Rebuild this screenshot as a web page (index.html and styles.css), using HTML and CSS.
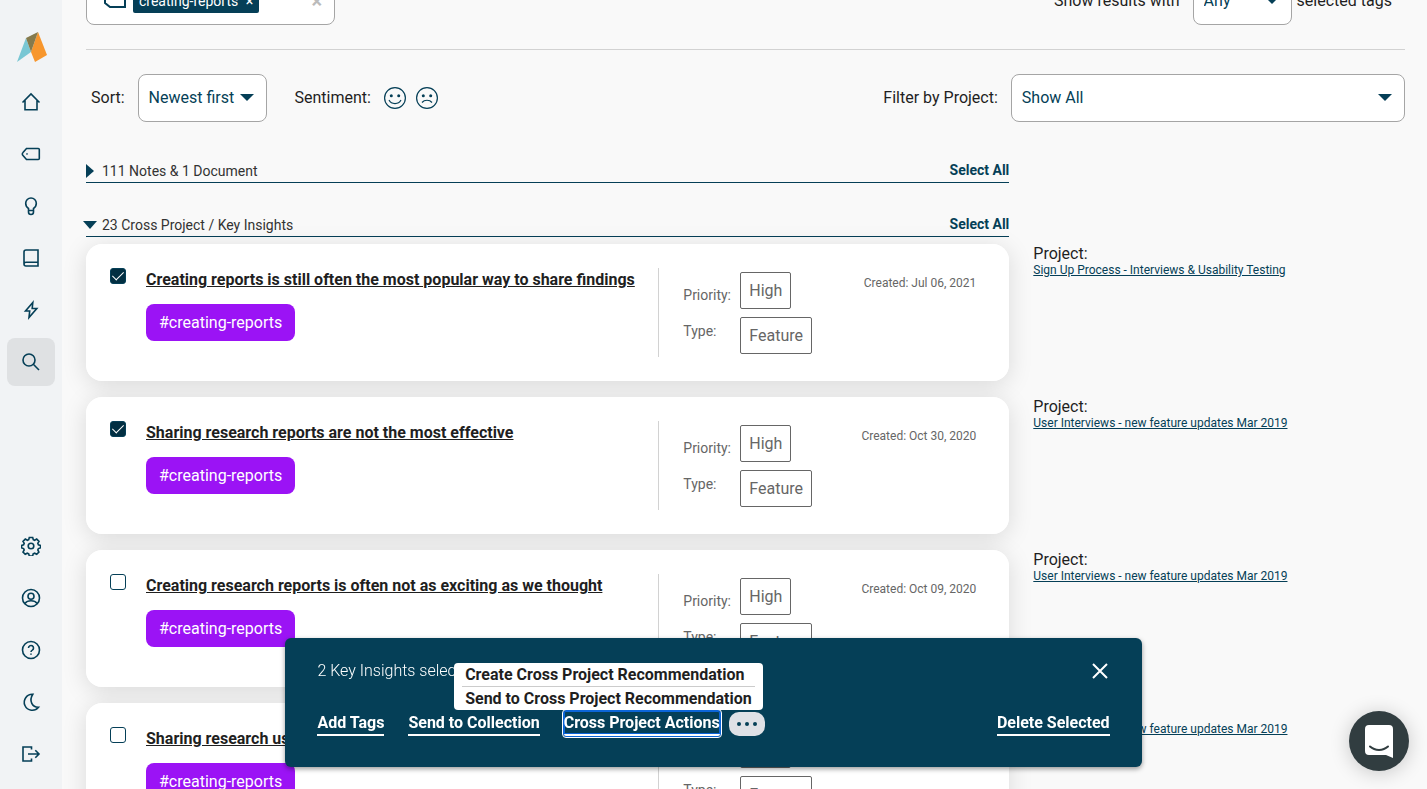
FILE: index.html
```html
<!DOCTYPE html>
<html lang="en">
<head>
    <meta charset="UTF-8">
    <meta name="viewport" content="width=device-width, initial-scale=1.0">
    <title>Search</title>
    <link rel="stylesheet" href="styles.css">
</head>
<body>

    <!-- Sidebar -->
    <nav class="sidebar" aria-label="Main">
        <a href="#" class="logo" aria-label="Home page">
            <svg width="30" height="30" viewBox="0 0 30 30">
                <path d="M9 6 14 20 0 30Z" fill="#79c7d4"/>
                <path d="M21 0 30 23 18 30 14 20Z" fill="#f7962d"/>
                <path d="M9 6 21 0 14 20Z" fill="#857a4c"/>
            </svg>
        </a>
        <div class="nav-group">
            <a href="#" class="nav-item" aria-label="Home">
                <svg class="icon" viewBox="0 0 20 20"><path d="M1.500 10.500 10 2l8.500 8.500M4 8.500v9.300h12V8.500"/></svg>
            </a>
            <a href="#" class="nav-item" aria-label="Tags">
                <svg class="icon" viewBox="0 0 20 20"><path d="M5.500 4.500H17.300a1 1 0 0 1 1 1v9a1 1 0 0 1-1 1H5.500L2 11.500a2 2 0 0 1 0-3Z"/><circle cx="6" cy="10" r=".2"/></svg>
            </a>
            <a href="#" class="nav-item" aria-label="Insights">
                <svg class="icon" viewBox="0 0 20 20"><path d="M7.500 14.500v-2C5.800 11.500 4.700 9.800 4.700 7.300a5.300 5.300 0 0 1 10.600 0c0 2.500-1.100 4.200-2.800 5.200v2ZM7.500 14.500v1.500a2.500 2.500 0 0 0 5 0v-1.500"/></svg>
            </a>
            <a href="#" class="nav-item" aria-label="Library">
                <svg class="icon" viewBox="0 0 20 20"><path d="M17 14.300V2H5a2 2 0 0 0-2 2v12a2 2 0 0 0 2 2h12v-3.700M3 16a2 2 0 0 1 2-1.700h12"/></svg>
            </a>
            <a href="#" class="nav-item" aria-label="Activity">
                <svg class="icon" viewBox="0 0 20 20"><path d="M11.800 2.500 4.500 11h4.200L8 17.500 15.800 8.500h-4.600Z"/></svg>
            </a>
            <a href="#" class="nav-item active" aria-label="Search">
                <svg class="icon" viewBox="0 0 20 20"><circle cx="8" cy="8" r="6"/><path d="m12.300 12.300 5.700 5.700"/></svg>
            </a>
        </div>
        <div class="nav-group bottom">
            <a href="#" class="nav-item" aria-label="Settings">
                <svg class="icon" viewBox="0 0 20 20"><circle cx="10" cy="10" r="2.800"/><path d="M8.300 1.500h3.400l.6 2.200 1.300.6 2.100-1.200 2.300 2.300-1.200 2 .6 1.400 2.100.6v2.500l-2.100.7-.6 1.300 1.100 2.200-2.200 2.200-2.100-1.100-1.400.6-.6 2.200H8.300l-.6-2.200-1.400-.6-2.100 1.100L2 16.100l1.200-2.200-.6-1.300-2-.7V9.400l2-.6.6-1.400-1.200-2 2.300-2.300 2.100 1.200 1.300-.6Z"/></svg>
            </a>
            <a href="#" class="nav-item" aria-label="Account">
                <svg class="icon" viewBox="0 0 20 20"><circle cx="10" cy="10" r="8.500"/><circle cx="10" cy="8.300" r="3"/><path d="M3.800 15.500c1.500-2 3.600-2.800 6.200-2.800s4.700.8 6.200 2.800"/></svg>
            </a>
            <a href="#" class="nav-item" aria-label="Help">
                <svg class="icon" viewBox="0 0 20 20"><circle cx="10" cy="10" r="8.500"/><path d="M7.500 8a2.500 2.500 0 1 1 3.800 2.100c-.9.500-1.300.9-1.300 1.900M10 13.500v1.300"/></svg>
            </a>
            <a href="#" class="nav-item" aria-label="Dark mode">
                <svg class="icon" viewBox="0 0 20 20"><path d="M11.800 2.300a8 8 0 1 0 5.700 13C11.500 15.500 7.500 9 11.800 2.300Z"/></svg>
            </a>
            <a href="#" class="nav-item" aria-label="Log out">
                <svg class="icon" viewBox="0 0 20 20"><path d="M10.500 5.500V3H2v14h8.500v-2.500M7 10h11M14.300 6.300 18 10l-3.700 3.700"/></svg>
            </a>
        </div>
    </nav>

    <main class="main">
        <!-- Search tags -->
        <div class="tag-row">
            <div class="tag-box">
                <svg class="tag-icon" viewBox="0 0 24 18"><path d="M7 2h15v13H7L2 11V6Z"/></svg>
                <span class="chip">creating-reports <button aria-label="Remove tag">×</button></span>
                <button class="clear" aria-label="Clear tags">×</button>
            </div>
            <div class="match">
                <label for="match">Show results with</label>
                <span class="select any"><select id="match"><option>Any</option><option>All</option></select></span>
                <span>selected tags</span>
            </div>
        </div>

        <!-- Filters -->
        <div class="filters">
            <label for="sort">Sort:</label>
            <span class="select sort"><select id="sort"><option>Newest first</option><option>Oldest first</option></select></span>
            <span>Sentiment:</span>
            <div class="faces">
                <button aria-label="Positive">
                    <svg class="face" viewBox="0 0 22 22"><circle cx="11" cy="11" r="10.400"/><path d="M5 13c2.500 4.700 9.500 4.700 12 0"/><circle class="eye" cx="7.300" cy="8.800" r="1.500"/><circle class="eye" cx="14.700" cy="8.800" r="1.500"/></svg>
                </button>
                <button aria-label="Negative">
                    <svg class="face" viewBox="0 0 22 22"><circle cx="11" cy="11" r="10.400"/><path d="M6 15.500c2.500-3 7.500-3 10 0"/><circle class="eye" cx="7.300" cy="8.800" r="1.500"/><circle class="eye" cx="14.700" cy="8.800" r="1.500"/></svg>
                </button>
            </div>
            <label class="project-label" for="project">Filter by Project:</label>
            <span class="select project"><select id="project"><option>Show All</option></select></span>
        </div>

        <!-- Results -->
        <div class="section-head">
            <button class="toggle" aria-expanded="false"><svg width="8" height="14" viewBox="0 0 8 14"><path d="M0 0 8 7 0 14Z"/></svg>111 Notes &amp; 1 Document</button>
            <button class="select-all">Select All</button>
        </div>
        <div class="section-head">
            <button class="toggle open" aria-expanded="true"><svg width="14" height="8" viewBox="0 0 14 8"><path d="M0 0H14L7 8Z"/></svg>23 Cross Project / Key Insights</button>
            <button class="select-all">Select All</button>
        </div>

        <div class="results">
            <div class="result">
                <article class="card">
                    <input type="checkbox" aria-label="Select insight" checked>
                    <div class="insight">
                        <a href="#" class="title">Creating reports is still often the most popular way to share findings</a>
                        <a href="#" class="tag">#creating-reports</a>
                    </div>
                    <div class="details">
                        <div class="names"><span>Priority:</span><span>Type:</span></div>
                        <div class="values"><span>High</span><span>Feature</span></div>
                        <div class="created">Created: Jul 06, 2021</div>
                    </div>
                </article>
                <div class="source">Project:<a href="#">Sign Up Process - Interviews &amp; Usability Testing</a></div>
            </div>
            <div class="result">
                <article class="card">
                    <input type="checkbox" aria-label="Select insight" checked>
                    <div class="insight">
                        <a href="#" class="title">Sharing research reports are not the most effective</a>
                        <a href="#" class="tag">#creating-reports</a>
                    </div>
                    <div class="details">
                        <div class="names"><span>Priority:</span><span>Type:</span></div>
                        <div class="values"><span>High</span><span>Feature</span></div>
                        <div class="created">Created: Oct 30, 2020</div>
                    </div>
                </article>
                <div class="source">Project:<a href="#">User Interviews - new feature updates Mar 2019</a></div>
            </div>
            <div class="result">
                <article class="card">
                    <input type="checkbox" aria-label="Select insight">
                    <div class="insight">
                        <a href="#" class="title">Creating research reports is often not as exciting as we thought</a>
                        <a href="#" class="tag">#creating-reports</a>
                    </div>
                    <div class="details">
                        <div class="names"><span>Priority:</span><span>Type:</span></div>
                        <div class="values"><span>High</span><span>Feature</span></div>
                        <div class="created">Created: Oct 09, 2020</div>
                    </div>
                </article>
                <div class="source">Project:<a href="#">User Interviews - new feature updates Mar 2019</a></div>
            </div>
            <div class="result">
                <article class="card">
                    <input type="checkbox" aria-label="Select insight">
                    <div class="insight">
                        <a href="#" class="title">Sharing research us</a>
                        <a href="#" class="tag">#creating-reports</a>
                    </div>
                    <div class="details">
                        <div class="names"><span>Priority:</span><span>Type:</span></div>
                        <div class="values"><span>High</span><span>Feature</span></div>
                    </div>
                </article>
                <div class="source">Project:<a href="#">User Interviews - new feature updates Mar 2019</a></div>
            </div>
        </div>
    </main>

    <!-- Bulk actions -->
    <div class="bulk-bar">
        <div class="bulk-row">
            <span class="count">2 Key Insights selected</span>
            <button class="close" aria-label="Close">
                <svg width="16" height="16" viewBox="0 0 16 16"><path d="m1 1 14 14M15 1 1 15"/></svg>
            </button>
        </div>
        <div class="bulk-row">
            <button class="action">Add Tags</button>
            <button class="action">Send to Collection</button>
            <div class="dropdown">
                <div class="menu">
                    <button>Create Cross Project Recommendation</button>
                    <button>Send to Cross Project Recommendation</button>
                </div>
                <button class="action focused">Cross Project Actions</button>
            </div>
            <button class="more" aria-label="More actions">
                <svg width="20" height="4" viewBox="0 0 20 4"><circle cx="2" cy="2" r="2"/><circle cx="10" cy="2" r="2"/><circle cx="18" cy="2" r="2"/></svg>
            </button>
            <button class="action delete">Delete Selected</button>
        </div>
    </div>

    <!-- Chat -->
    <button class="chat" aria-label="Open chat">
        <svg width="28" height="33" viewBox="0 0 28 33"><path d="M4 0h20a4 4 0 0 1 4 4v29l-7-3H4a4 4 0 0 1-4-4V4a4 4 0 0 1 4-4Z" fill="#fff"/><path d="M5 21.500c5 4.500 13 4.500 18 0" fill="none" stroke="#313d40" stroke-width="2" stroke-linecap="round"/></svg>
    </button>

</body>
</html>
```

FILE: styles.css
```css
* {
    box-sizing: border-box;
}
body {
    font-family: Roboto, Arial, sans-serif;
    font-size: 16px;
    line-height: 20px;
    color: #1f1f1f;
    background: #f9f9f9;
    margin: 0;
    display: flex;
    height: 100vh;
    overflow: hidden;
}
button {
    font: inherit;
    color: inherit;
    background: none;
    border: none;
    padding: 0;
    cursor: pointer;
}
svg {
    display: block;
}
/* Sidebar */
.sidebar {
    flex: 0 0 62px;
    background: #f1f3f5;
    padding: 32px 7px 11px;
    display: flex;
    flex-direction: column;
}
.logo {
    margin: 0 0 16px 10px;
}
.nav-group {
    display: flex;
    flex-direction: column;
    gap: 4px;
}
.nav-group.bottom {
    margin-top: auto;
}
.nav-item {
    height: 48px;
    border-radius: 8px;
    display: flex;
    align-items: center;
    justify-content: center;
}
.nav-item.active {
    background: #dfe1e3;
}
.icon {
    width: 20px;
    height: 20px;
    fill: none;
    stroke: #053f57;
    stroke-width: 1.6;
}
/* Search tags */
.main {
    flex: 1;
    min-width: 0;
    height: 100vh;
    overflow: hidden;
    padding: 0 22px 0 24px;
}
.tag-row {
    display: flex;
    justify-content: space-between;
    margin-top: -23px;
    padding-bottom: 24px;
    border-bottom: 1px solid #d2d2d2;
}
.tag-box {
    width: 249px;
    height: 48px;
    background: white;
    border: 1px solid #a5a5a5;
    border-radius: 8px;
    padding: 0 12px 0 16px;
    display: flex;
    align-items: center;
    gap: 6px;
}
.tag-icon {
    width: 24px;
    height: 18px;
    fill: none;
    stroke: #053f57;
    stroke-width: 2;
}
.chip {
    background: #053f57;
    color: white;
    font-size: 14px;
    line-height: 24px;
    padding: 0 6px;
    border-radius: 2px;
}
.chip button {
    margin-left: 4px;
}
.clear {
    margin-left: auto;
    color: #bbb;
    font-size: 20px;
    font-weight: bold;
}
.match {
    display: flex;
    align-items: center;
    gap: 5px;
    padding-right: 13px;
}
.match label {
    margin-right: 8px;
}
/* Dropdowns */
.select {
    position: relative;
}
.select::after {
    content: "";
    position: absolute;
    right: 13px;
    top: 20px;
    border: 7px solid transparent;
    border-top-color: #053f57;
    border-bottom: 0;
    pointer-events: none;
}
.select select {
    appearance: none;
    width: 100%;
    height: 48px;
    font: inherit;
    color: #053f57;
    background: white;
    border: 1px solid #a5a5a5;
    border-radius: 8px;
    padding: 0 10px;
}
.select.any {
    width: 99px;
}
.select.sort {
    width: 129px;
    margin-right: 15px;
}
.select.project {
    flex: 0 0 30%;
}
/* Filters */
.filters {
    display: flex;
    align-items: center;
    gap: 13px;
    padding: 24px 0 35px 5px;
}
.faces {
    display: flex;
    gap: 10px;
}
.face {
    width: 22px;
    height: 22px;
    fill: none;
    stroke: #053f57;
    stroke-width: 1.2;
}
.eye {
    fill: #053f57;
    stroke: none;
}
.project-label {
    margin-left: auto;
}
/* Section headings */
.section-head {
    width: 70%;
    height: 26px;
    margin-bottom: 28px;
    display: flex;
    justify-content: space-between;
    border-bottom: 1px solid #053f57;
    font-size: 14px;
    line-height: 26px;
}
.section-head + .section-head {
    margin-bottom: 7px;
}
.toggle {
    display: flex;
    align-items: center;
    gap: 8px;
    padding-top: 3px;
    color: #333;
}
.toggle.open {
    gap: 5px;
    margin-left: -3px;
}
.toggle svg {
    fill: #053f57;
}
.select-all {
    color: #053f57;
    font-weight: bold;
}
/* Result cards */
.results {
    isolation: isolate;
}
.result {
    display: flex;
    gap: 24px;
    margin-bottom: 16px;
}
.card {
    position: relative;
    flex: 0 0 70%;
    min-height: 137px;
    padding: 24px;
    display: flex;
    background: white;
    border-radius: 16px;
}
/* shadow sits under every card so neighbours stay white */
.card::before {
    content: "";
    position: absolute;
    inset: 0;
    z-index: -1;
    border-radius: 16px;
    box-shadow: 0 4px 24px rgba(0, 0, 0, 0.13);
}
.card input {
    appearance: none;
    width: 16px;
    height: 16px;
    margin: 0 20px 0 0;
    border: 1px solid #053f57;
    border-radius: 3px;
    display: grid;
    justify-items: center;
}
.card input:checked {
    background: #022f42;
}
.card input:checked::before {
    content: "";
    width: 5px;
    height: 10px;
    border: solid white;
    border-width: 0 1px 1px 0;
    transform: rotate(45deg);
}
.insight {
    flex: 1;
    min-width: 0;
    display: flex;
    flex-direction: column;
    align-items: flex-start;
    gap: 12px;
}
.title {
    color: #1f1f1f;
    font-weight: bold;
    line-height: 24px;
}
.tag {
    background: #9b13f5;
    color: white;
    line-height: 37px;
    padding: 0 13px;
    border-radius: 8px;
    text-decoration: none;
}
.details {
    flex: 0 0 327px;
    display: flex;
    border-left: 1px solid #d2d2d2;
    padding: 0 9px 0 24px;
    color: #666;
}
.names {
    width: 57px;
    padding-top: 9px;
    display: flex;
    flex-direction: column;
    font-size: 14px;
    line-height: 36px;
}
.values {
    padding-top: 4px;
    display: flex;
    flex-direction: column;
    align-items: flex-start;
    gap: 8px;
}
.values span {
    border: 1px solid #666;
    border-radius: 2px;
    padding: 0 8px;
    line-height: 35px;
}
.created {
    margin-left: auto;
    padding-top: 5px;
    font-size: 12px;
}
.source a {
    display: block;
    color: #053f57;
    font-size: 12px;
    line-height: 12px;
}
/* Bulk actions */
.bulk-bar {
    position: fixed;
    left: 20%;
    right: 20%;
    bottom: 22px;
    padding: 23px 32px 31px;
    display: flex;
    flex-direction: column;
    gap: 30px;
    background: #053f57;
    color: white;
    border-radius: 6px;
    box-shadow: 0 2px 5px rgba(0, 0, 0, 0.4);
}
.bulk-row {
    display: flex;
    align-items: center;
    gap: 24px;
}
.count {
    font-weight: 300;
}
.close {
    margin-left: auto;
    padding: 2px;
}
.close svg {
    stroke: white;
    stroke-width: 2;
}
.action {
    display: block;
    font-weight: bold;
    line-height: 23px;
    border-bottom: 2px solid white;
}
.dropdown {
    position: relative;
}
.focused {
    border-radius: 2px;
    outline: 1px solid white;
    outline-offset: 1px;
    box-shadow: 0 0 0 1px #0b65d8, inset 0 0 0 1px #0b65d8;
}
.menu {
    position: absolute;
    right: -43px;
    bottom: 26px;
    padding: 0 8px;
    background: white;
    border-radius: 4px;
}
.menu button {
    display: block;
    width: 100%;
    padding: 0 3px;
    color: #1f1f1f;
    font-weight: bold;
    line-height: 23px;
    text-align: left;
    white-space: nowrap;
}
.menu button + button {
    border-top: 1px solid #ccc;
}
.more {
    margin-left: -15px;
    padding: 10px 8px;
    background: #dfe1e6;
    border-radius: 10px;
}
.more svg {
    fill: #053f57;
}
.delete {
    margin-left: auto;
}
/* Chat */
.chat {
    position: fixed;
    right: 18px;
    bottom: 18px;
    width: 60px;
    height: 60px;
    display: grid;
    place-items: center;
    background: #313d40;
    border-radius: 50%;
    box-shadow: 0 2px 20px rgba(0, 0, 0, 0.2);
}
```
